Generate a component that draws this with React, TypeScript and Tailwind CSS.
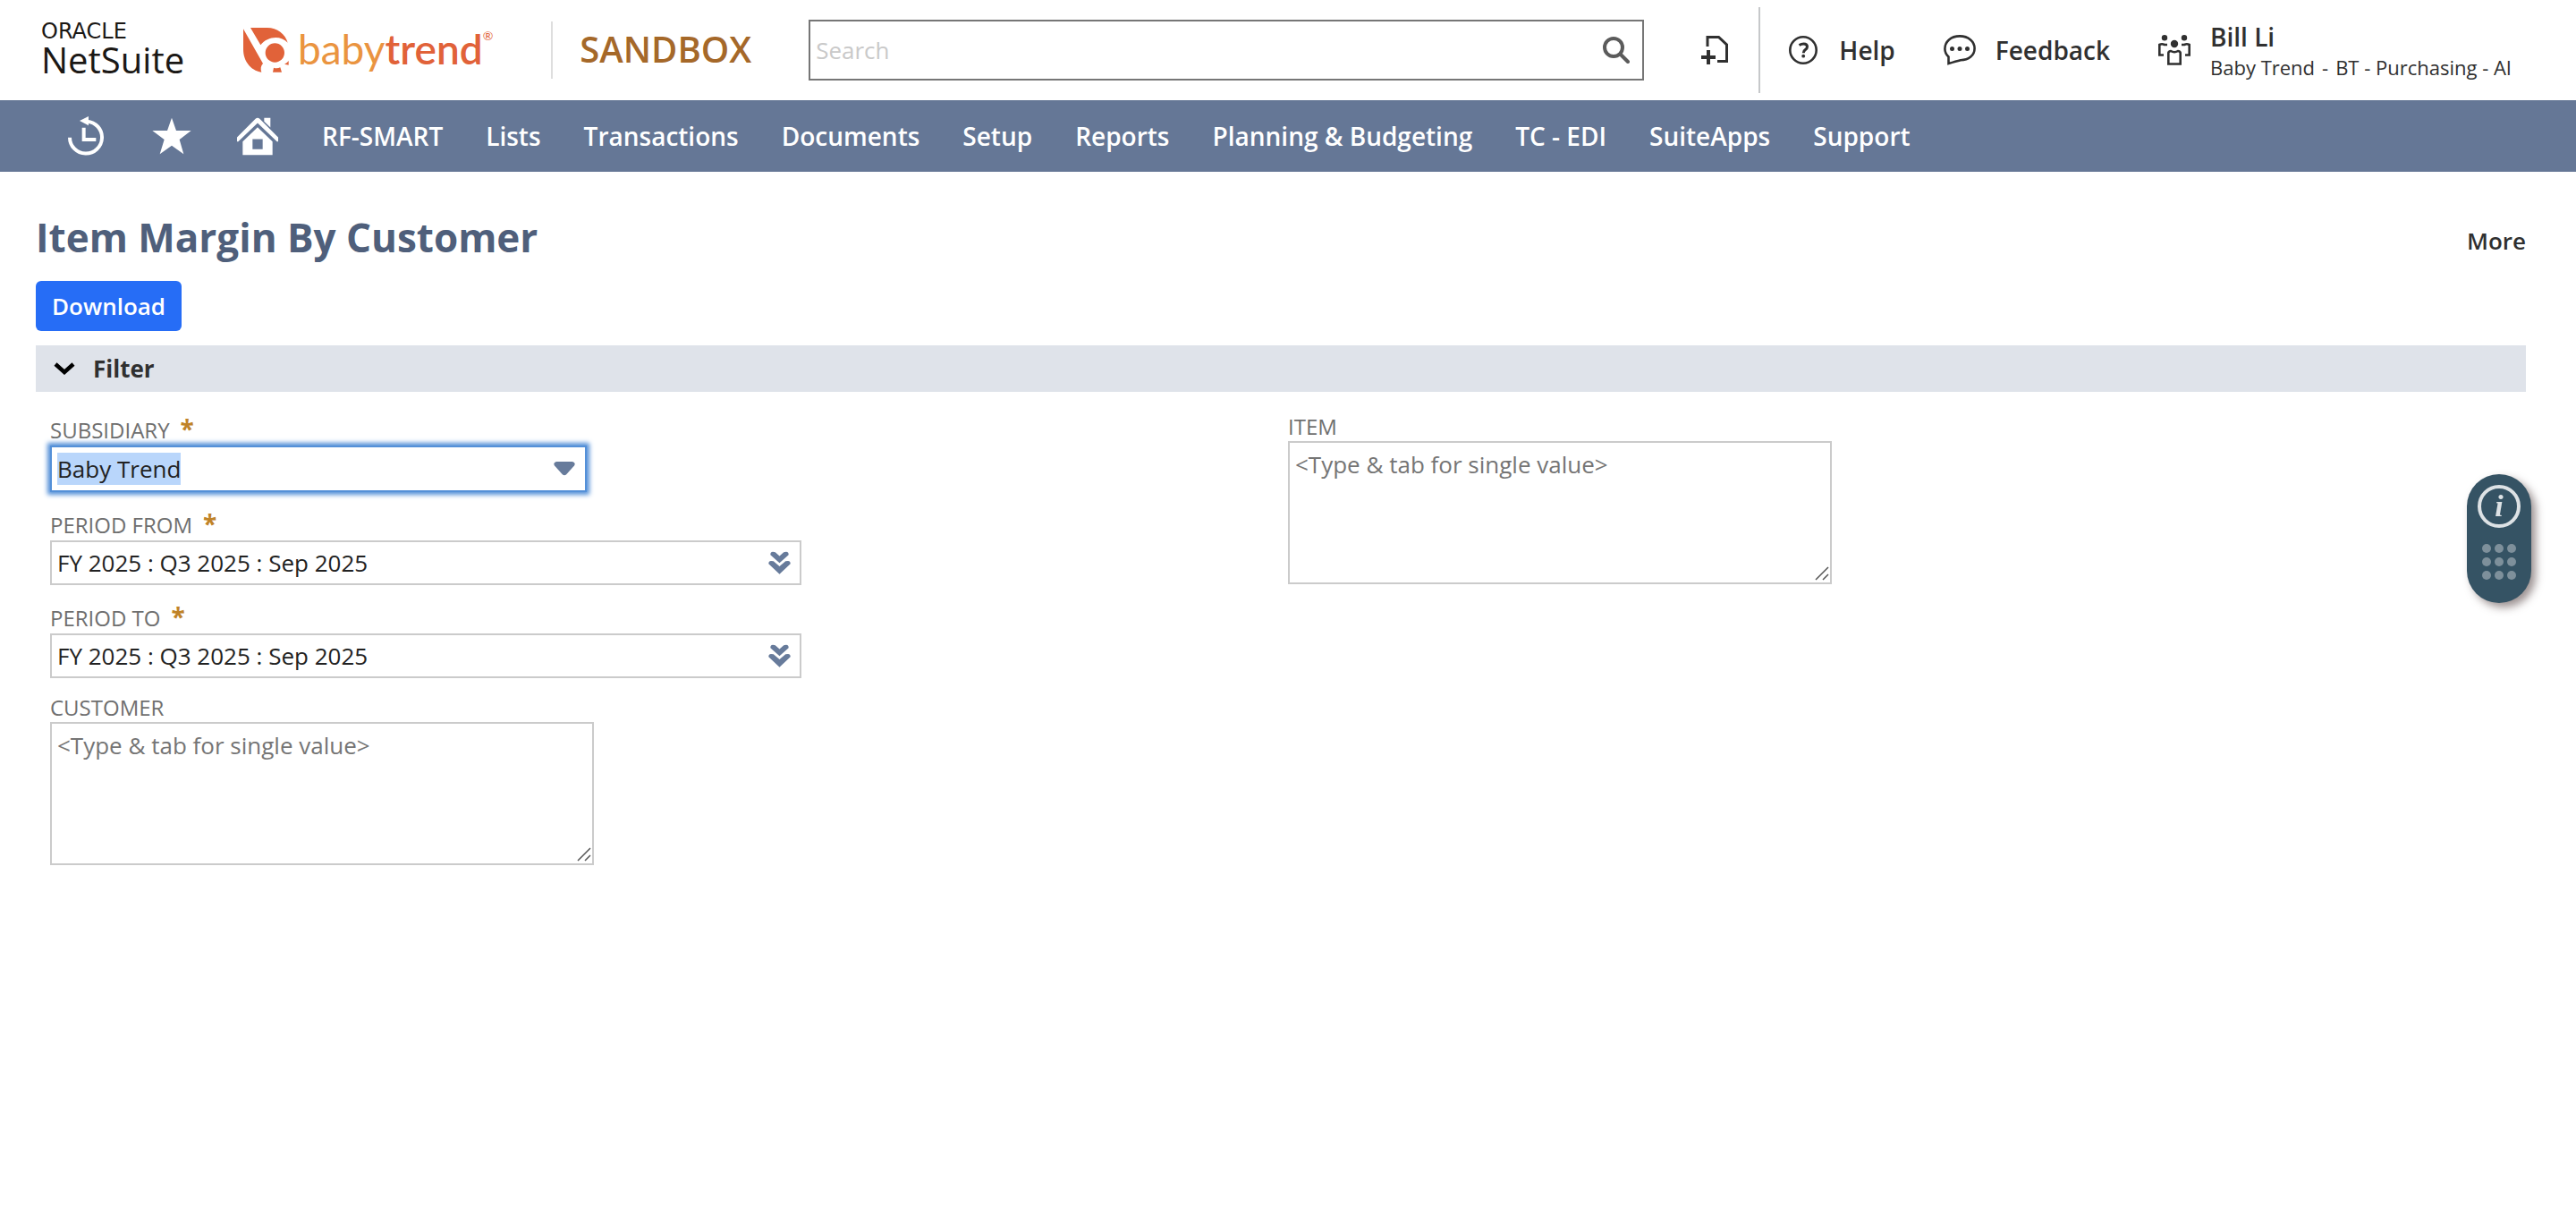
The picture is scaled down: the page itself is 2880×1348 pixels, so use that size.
import { useEffect, useRef } from "react";
import type { ReactNode } from "react";

const menus = [
  "RF-SMART",
  "Lists",
  "Transactions",
  "Documents",
  "Setup",
  "Reports",
  "Planning & Budgeting",
  "TC - EDI",
  "SuiteApps",
  "Support",
];

function BabyTrendMark() {
  return (
    <svg viewBox="0 0 153 150" className="h-[50px] w-[51px]" fill="#e16239" aria-hidden="true">
      <path d="M24 0H80C114 0 141 22 149 50C126 24 80 28 58 58Z" />
      <path d="M0 4L66 120C59 127 57 138 61 149C23 143 0 110 0 72Z" />
      <circle cx="106" cy="84" r="32" />
      <path d="M152 111V125L138 122Q147 119 152 111Z" />
      <path d="M102 134Q113 138 124 133L129 149H99Z" />
    </svg>
  );
}

function HistoryIcon() {
  return (
    <svg viewBox="48 30 120 132" className="h-11 w-10" aria-hidden="true">
      <path d="M54 101A54 54 0 1 0 112 47" fill="none" stroke="#fff" strokeWidth="12" />
      <path d="M87 45L117 30V61Z" fill="#fff" />
      <path d="M101 68V108H142" fill="none" stroke="#fff" strokeWidth="12" />
    </svg>
  );
}

function StarIcon() {
  return (
    <svg viewBox="330 34 132 126" className="h-[42px] w-11" fill="#fff" aria-hidden="true">
      <path d="M396 36L411 79H461L422 109L436 158L396 129L356 158L371 109L331 79H381Z" />
    </svg>
  );
}

function HomeIcon() {
  return (
    <svg viewBox="615 32 138 128" className="h-[43px] w-[46px]" aria-hidden="true">
      <path d="M615 113V99L677 37Q684 30 691 37L753 99V113H749L684 51L619 113Z" fill="#fff" />
      <path d="M706 34H727V66L706 46Z" fill="#fff" />
      <path d="M684 65L734 113V158H634V113ZM667 105V139H701V105Z" fill="#fff" fillRule="evenodd" />
    </svg>
  );
}

function SearchIcon() {
  return (
    <svg viewBox="0 0 30 30" className="size-[30px]" fill="none" stroke="#5b5b5b" aria-hidden="true">
      <circle cx="12" cy="12" r="10" strokeWidth="4" />
      <path d="M19.5 19.5L28 28" strokeWidth="4" strokeLinecap="round" />
    </svg>
  );
}

function NewDocIcon() {
  return (
    <svg viewBox="0 0 30 32" className="h-8 w-[30px]" fill="none" stroke="#303030" aria-hidden="true">
      <path d="M7 12V1.500H19.500L28.500 10V28.500H18" strokeWidth="3" />
      <path d="M0 24H16M8 16V32" strokeWidth="4" />
    </svg>
  );
}

function HelpIcon() {
  return (
    <svg viewBox="0 0 32 32" className="size-8" aria-hidden="true">
      <circle cx="16" cy="16" r="14.700" fill="none" stroke="#303030" strokeWidth="2.600" />
      <path d="M11.500 10.500Q14 9 16.500 9Q20.500 9 20.500 12.300Q20.500 14.300 18.300 15.600Q16.300 16.800 16.300 19.300" fill="none" stroke="#303030" strokeWidth="3" />
      <circle cx="16.200" cy="22.700" r="1.900" fill="#303030" />
    </svg>
  );
}

function FeedbackIcon() {
  return (
    <svg viewBox="0 0 36 34" className="h-[34px] w-9" aria-hidden="true">
      <path
        d="M5.500 32V24.500C2.800 22 1.400 19 1.400 15.500C1.400 7.500 8 1.400 18 1.400S34.600 7.500 34.600 15C34.600 23 28 28.200 19 28.200Q14 29.500 5.500 32Z"
        fill="none"
        stroke="#303030"
        strokeWidth="2.600"
      />
      <circle cx="9.500" cy="15.500" r="2.500" fill="#303030" />
      <circle cx="18" cy="15.500" r="2.500" fill="#303030" />
      <circle cx="26.500" cy="15.500" r="2.500" fill="#303030" />
    </svg>
  );
}

function RolesIcon() {
  return (
    <svg viewBox="0 0 36 34" className="h-[34px] w-9" aria-hidden="true">
      <g fill="#303030">
        <circle cx="7" cy="3.200" r="3.200" />
        <circle cx="29" cy="3.200" r="3.200" />
        <circle cx="18" cy="10" r="4.200" />
      </g>
      <g fill="none" stroke="#303030" strokeWidth="2.600">
        <path d="M10 11H7Q4 9.500 1.300 11V22.500H6" />
        <path d="M26 11H29Q32 9.500 34.700 11V22.500H30" />
        <path d="M11.300 32.500V20Q12 18 14 18Q18 20.500 22 18Q24 18 24.700 20V32.500Z" />
      </g>
    </svg>
  );
}

function DoubleChevron() {
  return (
    <svg viewBox="56 48 74 76" className="h-[26px] w-[25px]" fill="#677b9b" aria-hidden="true">
      <path d="M63 60Q62 51 71 50L79 51L93 64L107 51L115 50Q124 51 123 60L93 87Z" />
      <path d="M57 90Q56 81 65 80L73 81L93 98L113 81L121 80Q130 81 129 90L93 124Z" />
    </svg>
  );
}

function Label({ id, required, children }: { id: string; required?: boolean; children: ReactNode }) {
  if (!required) {
    return (
      <label htmlFor={id} className="block text-2xl leading-8 text-[#6f6f6f]">
        {children}
      </label>
    );
  }
  return (
    <label htmlFor={id} className="flex h-[37px] items-end gap-3 pb-px text-2xl leading-8 text-[#6f6f6f]">
      {children}
      <span className="text-[28px] font-bold leading-9 text-[#c08328]">*</span>
    </label>
  );
}

function PeriodField({ id, label }: { id: string; label: string }) {
  return (
    <div>
      <Label id={id} required>
        {label}
      </Label>
      <div className="relative w-[840px] max-w-full">
        <select
          id={id}
          className="h-[50px] w-full appearance-none border-2 border-[#cbcbcb] bg-white px-1.5 text-[26px] leading-9 text-[#222]"
        >
          <option>FY 2025 : Q3 2025 : Sep 2025</option>
        </select>
        <span className="pointer-events-none absolute inset-y-0 right-3 flex items-center">
          <DoubleChevron />
        </span>
      </div>
    </div>
  );
}

function MultiValueField({ id, label }: { id: string; label: string }) {
  return (
    <div>
      <Label id={id}>{label}</Label>
      <div className="relative w-[608px] max-w-full">
        <textarea
          id={id}
          placeholder="<Type & tab for single value>"
          className="block h-40 w-full resize-none border-2 border-[#cbcbcb] px-1.5 py-1.5 text-[26px] leading-9 placeholder:text-[#757575]"
        />
        <svg
          viewBox="0 0 16 16"
          className="pointer-events-none absolute right-[3px] bottom-1 size-4"
          fill="none"
          stroke="#555"
          strokeWidth="1.500"
          aria-hidden="true"
        >
          <path d="M1 15L15 1M9 15L15 9" />
        </svg>
      </div>
    </div>
  );
}

export default function App() {
  const subsidiary = useRef<HTMLInputElement>(null);

  useEffect(() => {
    subsidiary.current?.focus();
    subsidiary.current?.select();
  }, []);

  return (
    <div className="min-h-screen bg-white font-['Open_Sans','Noto_Sans',sans-serif] text-[#303030]">
      <header className="flex h-28 items-center pr-[72px] pl-[46px]">
        <a href="#" aria-label="Oracle NetSuite" className="flex w-[172px] flex-col pb-0.5 text-[#1b1815]">
          <span className="font-['DejaVu_Sans',sans-serif] text-2xl leading-6">ORACLE</span>
          <span className="text-[40px] leading-10">NetSuite</span>
        </a>
        <a href="#" aria-label="Baby Trend" className="ml-[54px] flex items-center gap-2.5">
          <BabyTrendMark />
          <span className="flex items-start pb-0.5 font-['Lato',sans-serif] text-[46px] leading-[46px]">
            <span className="text-[#ea9440]">baby</span>
            <span className="font-semibold text-[#e16239]">trend</span>
            <span className="text-sm leading-4 text-[#e16239]">®</span>
          </span>
        </a>
        <div className="ml-[65px] h-16 w-0.5 bg-[#dedede]" />
        <span className="ml-[30px] pb-0.5 text-[40px] leading-[56px] font-semibold text-[#a56829]">SANDBOX</span>
        <form className="ml-16 flex h-[68px] min-w-0 flex-1 items-center border-2 border-[#767676] pr-3.5">
          <input
            type="text"
            aria-label="Search"
            placeholder="Search"
            className="h-full min-w-0 flex-1 px-1.5 text-[26px] outline-none placeholder:text-[#c9c9c9]"
          />
          <button type="button" aria-label="Run search">
            <SearchIcon />
          </button>
        </form>
        <button type="button" aria-label="Create new" className="ml-16">
          <NewDocIcon />
        </button>
        <div className="ml-[34px] h-24 w-0.5 bg-[#c6c8ca]" />
        <a href="#" className="ml-8 flex items-center gap-6 text-[28px] font-semibold">
          <HelpIcon />
          Help
        </a>
        <a href="#" className="ml-[54px] flex items-center gap-[22px] text-[28px] font-semibold">
          <FeedbackIcon />
          Feedback
        </a>
        <button type="button" className="ml-[54px] flex items-center gap-[22px] text-left">
          <RolesIcon />
          <span className="flex flex-col pt-0.5">
            <span className="text-[28px] leading-9 font-semibold">Bill Li</span>
            <span className="flex gap-2 text-[22px] leading-8 whitespace-nowrap">
              <span>Baby Trend</span>
              <span>-</span>
              <span>BT - Purchasing - AI</span>
            </span>
          </span>
        </button>
      </header>

      <nav className="flex h-20 items-center bg-[#657796] pl-12 text-[28px] font-semibold text-white">
        <a href="#" aria-label="Recent records" className="flex w-24 justify-center">
          <HistoryIcon />
        </a>
        <a href="#" aria-label="Shortcuts" className="flex w-24 justify-center">
          <StarIcon />
        </a>
        <a href="#" aria-label="Home" className="flex w-24 justify-center">
          <HomeIcon />
        </a>
        {menus.map((menu) => (
          <a key={menu} href="#" className="px-6 whitespace-nowrap">
            {menu}
          </a>
        ))}
      </nav>

      <main className="pt-[43px] pr-14 pl-10">
        <div className="flex items-end justify-between">
          <h1 className="text-[44px] leading-[60px] font-bold text-[#4f5f7b]">Item Margin By Customer</h1>
          <button type="button" className="pb-2 text-[26px] leading-9 font-semibold">
            More
          </button>
        </div>
        <button
          type="button"
          className="mt-[19px] flex h-14 items-center rounded-md bg-[#266df6] px-[18px] text-[26px] font-semibold text-white"
        >
          Download
        </button>
        <section>
          <h2 className="mt-4">
            <button
              type="button"
              aria-expanded="true"
              className="flex h-[52px] w-full items-center gap-5 bg-[#dfe3ea] px-5 text-[26px] font-bold"
            >
              <svg viewBox="0 0 24 14" className="h-3.5 w-6" fill="none" stroke="#000" strokeWidth="4.500" aria-hidden="true">
                <path d="M2 2L12 11L22 2" />
              </svg>
              Filter
            </button>
          </h2>
          <div className="grid grid-cols-2 pt-[23px] pl-4">
            <div className="flex flex-col gap-[17px]">
              <div>
                <Label id="subsidiary" required>
                  SUBSIDIARY
                </Label>
                <div className="relative w-[600px] max-w-full">
                  <input
                    ref={subsidiary}
                    id="subsidiary"
                    type="text"
                    role="combobox"
                    aria-expanded="false"
                    defaultValue="Baby Trend"
                    className="block h-[52px] w-full border-2 border-[#5490d8] px-1.5 text-[26px] leading-9 text-[#222] shadow-[0_0_5px_3px_#5490d8] outline-none selection:bg-[#b9d6fb] selection:text-[#222]"
                  />
                  <svg
                    viewBox="0 0 24 16"
                    className="pointer-events-none absolute top-[18px] right-[13px] h-4 w-6"
                    fill="#677b9b"
                    aria-hidden="true"
                  >
                    <path d="M3 0H21Q25 1 23 4.500L14 14.500Q12 16 10 14.500L1 4.500Q-1 1 3 0Z" />
                  </svg>
                </div>
              </div>
              <PeriodField id="period-from" label="PERIOD FROM" />
              <PeriodField id="period-to" label="PERIOD TO" />
              <MultiValueField id="customer" label="CUSTOMER" />
            </div>
            <div>
              <MultiValueField id="item" label="ITEM" />
            </div>
          </div>
        </section>
      </main>

      <aside className="fixed top-[530px] right-[50px] flex h-36 w-[72px] flex-col items-center gap-[18px] rounded-full bg-[#355364] pt-3 shadow-[5px_5px_10px_rgba(60,40,40,0.5)]">
        <button
          type="button"
          aria-label="Information"
          className="flex size-12 items-center justify-center rounded-full border-4 border-[#dde2e5] font-['Liberation_Serif',serif] text-[34px] leading-none font-bold text-[#dde2e5] italic"
        >
          i
        </button>
        <button type="button" aria-label="Move panel" className="grid grid-cols-3 gap-x-1 gap-y-[5px]">
          {Array.from({ length: 9 }, (_, n) => (
            <span key={n} className="size-2.5 rounded-full bg-[#7e909b]" />
          ))}
        </button>
      </aside>
    </div>
  );
}
